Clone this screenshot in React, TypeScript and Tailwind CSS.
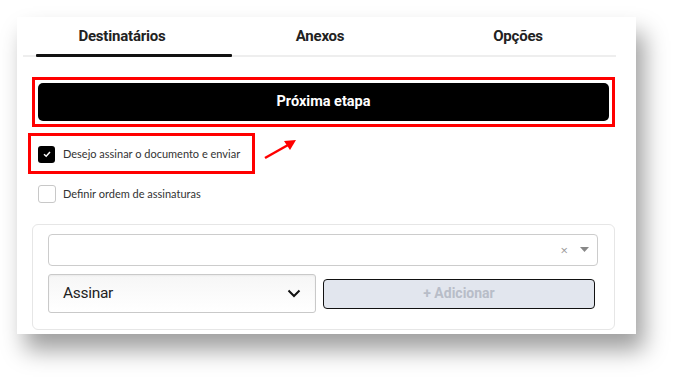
import React from "react";

export default function App() {
  return (
    <div className="relative w-[684px] h-[383px] bg-white overflow-hidden" style={{ fontFamily: "Roboto, 'Liberation Sans', sans-serif" }}>
      <div className="absolute left-[17px] top-[17px] w-[619px] h-[317px] bg-white shadow-[8px_16px_22px_rgba(0,0,0,0.38)] flex flex-col">
        {/* tabs */}
        <div className="ml-[6px] w-[594px] h-[37px] grid grid-cols-3 text-[15px] font-bold text-[#222] items-center pt-[1px]">
          <div className="text-center tracking-[-0.2px]">Destinatários</div>
          <div className="text-center tracking-[-0.2px]">Anexos</div>
          <div className="text-center tracking-[-0.2px]">Opções</div>
        </div>
        <div className="relative ml-[6px] w-[593px] h-[3px] flex items-center">
          <div className="absolute left-0 right-0 top-[1px] h-[2px] bg-[#eeeeee]" />
          <div className="relative ml-[13px] w-[196px] h-[3px] bg-[#111] rounded-[1px]" />
        </div>
        {/* next step */}
        <div className="mt-[20px] ml-[15px] w-[583px] h-[50px] border-[3px] border-[#ff0000] p-[3px]">
          <div className="h-full bg-black rounded-[5px] flex items-center justify-center text-white font-bold text-[14.5px]">
            Próxima etapa
          </div>
        </div>
        {/* checkbox 1 */}
        <div className="mt-[6px] ml-[11px] w-[227px] h-[41px] border-[3px] border-[#ff0000] flex items-center pl-[7px] pt-[1px]">
          <div className="w-[17px] h-[17px] rounded-[3px] bg-black flex items-center justify-center shrink-0">
            <svg width="10" height="10" viewBox="0 0 10 10">
              <path d="M2 5.2 L4.2 7.2 L8 3" stroke="white" strokeWidth="1.5" fill="none" />
            </svg>
          </div>
          <span className="ml-[8px] text-[11px] text-[#333] whitespace-nowrap" style={{ fontFamily: "Lato, 'Open Sans', sans-serif" }}>
            Desejo assinar o documento e enviar
          </span>
        </div>
        {/* checkbox 2 */}
        <div className="mt-[11px] ml-[21px] flex items-center">
          <div className="w-[18px] h-[18px] rounded-[3px] border border-[#c8c8c8] bg-white" />
          <span className="ml-[7px] text-[11px] text-[#333] whitespace-nowrap" style={{ fontFamily: "Lato, 'Open Sans', sans-serif" }}>
            Definir ordem de assinaturas
          </span>
        </div>
        {/* card */}
        <div className="mt-[21px] ml-[15px] w-[583px] h-[106px] border border-[#e6e6e6] rounded-[6px] pt-[9px] pl-[15px] pr-[16px]">
          <div className="h-[32px] border border-[#cccccc] rounded-[4px] flex items-center justify-end pr-[8px]">
            <span className="text-[#999] text-[13px] leading-none mr-[12px]" style={{ fontFamily: "'Open Sans', sans-serif" }}>×</span>
            <svg width="9" height="6" viewBox="0 0 9 6"><path d="M0 0 L9 0 L4.5 5 Z" fill="#888" /></svg>
          </div>
          <div className="mt-[8px] flex items-center">
            <div className="w-[268px] h-[39px] border border-[#c9c9c9] rounded-[3px] bg-gradient-to-b from-[#f6f6f6] to-white shadow-[inset_0_1px_2px_rgba(0,0,0,0.05)] flex items-center justify-between pl-[14px] pr-[14px]">
              <span className="text-[15.5px] text-[#222] tracking-[-0.3px]">Assinar</span>
              <svg width="14" height="9" viewBox="0 0 14 9"><path d="M1.5 1.5 L7 7 L12.5 1.5" stroke="#111" strokeWidth="2" fill="none" /></svg>
            </div>
            <div className="ml-[7px] w-[272px] h-[30px] border-[1.5px] border-[#111] rounded-[4px] bg-[#e2e6ee] flex items-center justify-center text-[14px] font-bold text-[#b8bdc8]">
              + Adicionar
            </div>
          </div>
        </div>
      </div>
      {/* annotation arrow */}
      <svg className="absolute left-[262px] top-[136px]" width="40" height="26" viewBox="0 0 40 26">
        <path d="M3 22 L26 9" stroke="#ff0000" strokeWidth="2.5" fill="none" />
        <path d="M34 4 L22 5 L28 14 Z" fill="#ff0000" />
      </svg>
    </div>
  );
}
